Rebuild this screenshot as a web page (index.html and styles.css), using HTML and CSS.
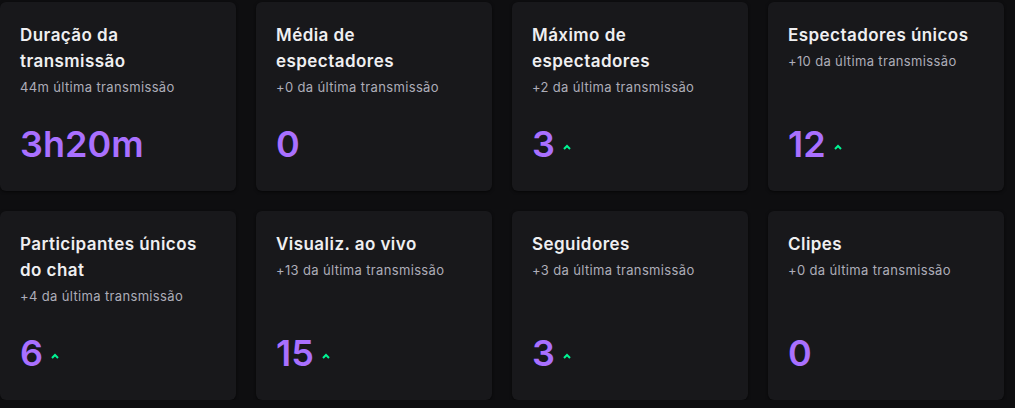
FILE: index.html
```html
<!DOCTYPE html>
<html lang="pt-BR">
<head>
<meta charset="utf-8">
<link rel="stylesheet" href="styles.css">
</head>
<body>
<div class="grid">
  <div class="card">
    <div class="title">Duração da transmissão</div>
    <div class="sub">44m última transmissão</div>
    <div class="value"><span class="num">3h20m</span></div>
  </div>
  <div class="card">
    <div class="title">Média de espectadores</div>
    <div class="sub">+0 da última transmissão</div>
    <div class="value"><span class="num">0</span></div>
  </div>
  <div class="card">
    <div class="title">Máximo de espectadores</div>
    <div class="sub">+2 da última transmissão</div>
    <div class="value"><span class="num">3</span><svg class="up" viewBox="0 0 8 6" width="8" height="6"><path d="M1 5 L4 2 L7 5" fill="none" stroke="#00f593" stroke-width="2"/></svg></div>
  </div>
  <div class="card">
    <div class="title">Espectadores únicos</div>
    <div class="sub">+10 da última transmissão</div>
    <div class="value"><span class="num">12</span><svg class="up" viewBox="0 0 8 6" width="8" height="6"><path d="M1 5 L4 2 L7 5" fill="none" stroke="#00f593" stroke-width="2"/></svg></div>
  </div>
  <div class="card">
    <div class="title">Participantes únicos do chat</div>
    <div class="sub">+4 da última transmissão</div>
    <div class="value"><span class="num">6</span><svg class="up" viewBox="0 0 8 6" width="8" height="6"><path d="M1 5 L4 2 L7 5" fill="none" stroke="#00f593" stroke-width="2"/></svg></div>
  </div>
  <div class="card">
    <div class="title">Visualiz. ao vivo</div>
    <div class="sub">+13 da última transmissão</div>
    <div class="value"><span class="num">15</span><svg class="up" viewBox="0 0 8 6" width="8" height="6"><path d="M1 5 L4 2 L7 5" fill="none" stroke="#00f593" stroke-width="2"/></svg></div>
  </div>
  <div class="card">
    <div class="title">Seguidores</div>
    <div class="sub">+3 da última transmissão</div>
    <div class="value"><span class="num">3</span><svg class="up" viewBox="0 0 8 6" width="8" height="6"><path d="M1 5 L4 2 L7 5" fill="none" stroke="#00f593" stroke-width="2"/></svg></div>
  </div>
  <div class="card">
    <div class="title">Clipes</div>
    <div class="sub">+0 da última transmissão</div>
    <div class="value"><span class="num">0</span></div>
  </div>
</div>
</body>
</html>
```
FILE: styles.css
```css
html, body {
  margin: 0;
  padding: 0;
  background: #0e0e10;
  font-family: Inter, "Noto Sans", sans-serif;
  color: #efeff1;
}
.grid {
  display: grid;
  grid-template-columns: repeat(4, 236px);
  grid-auto-rows: 189px;
  gap: 20px;
  padding-top: 2px;
}
.card {
  background: #18181b;
  border-radius: 6px;
  box-shadow: 0 1px 3px rgba(0,0,0,0.6);
  padding: 20px 20px 0 20px;
  display: flex;
  flex-direction: column;
  box-sizing: border-box;
}
.title {
  font-size: 17px;
  font-weight: 600;
  line-height: 26px;
  letter-spacing: 0.45px;
  color: #efeff1;
}
.sub {
  font-size: 13px;
  line-height: 18px;
  margin-top: 4px;
  letter-spacing: 0.35px;
  color: #adadb8;
}
.value {
  margin-top: auto;
  display: flex;
  align-items: center;
  height: 60px;
  padding-bottom: 17px;
}
.num {
  font-size: 36px;
  font-weight: 600;
  line-height: 44px;
  color: #a970ff;
}
.up {
  margin-left: 8px;
  margin-top: 6px;
}
```
